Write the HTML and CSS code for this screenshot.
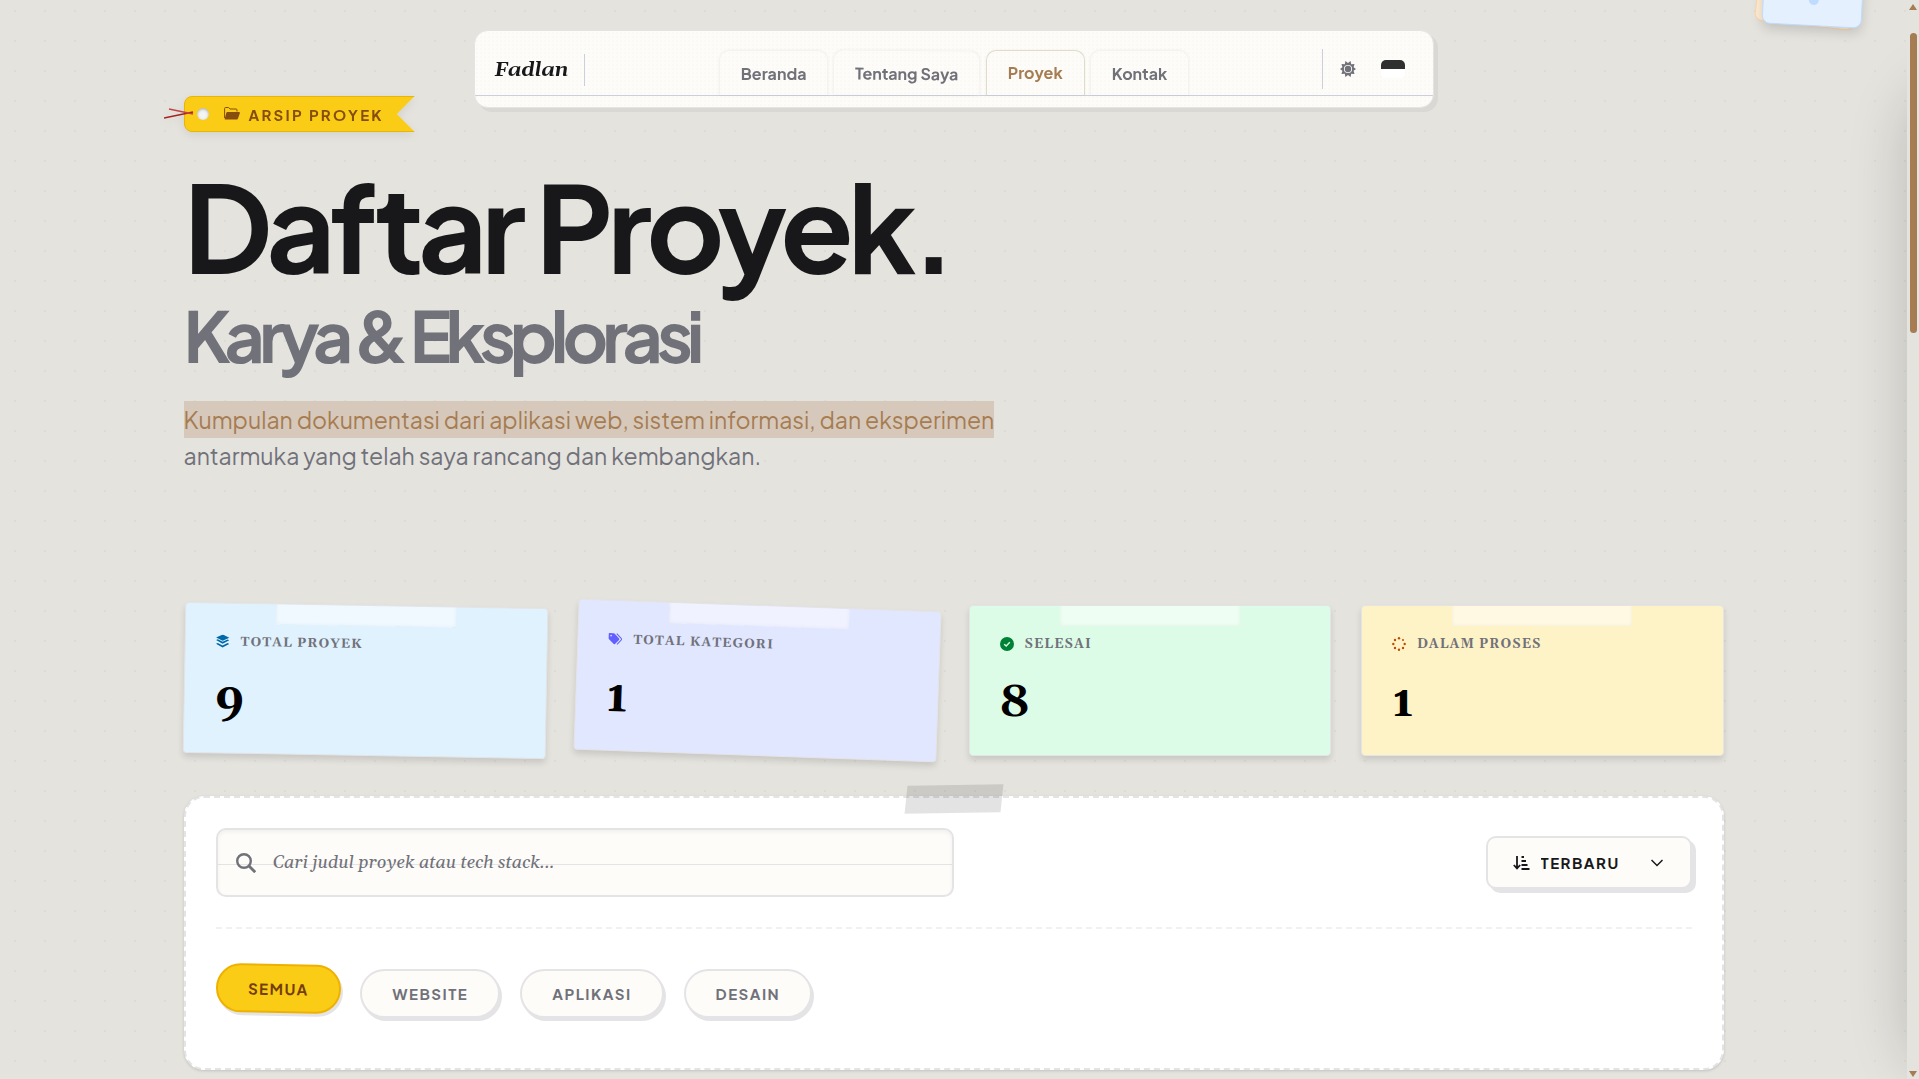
FILE: index.html
```html
<!DOCTYPE html>
<html lang="id">
<head>
    <meta charset="UTF-8">
    <meta name="viewport" content="width=device-width, initial-scale=1.0">
    <title>Daftar Proyek</title>
    <link rel="stylesheet" href="styles.css">
</head>
<body>

<!-- Navbar -->
<header class="navbar">
    <div class="navbar-inner">
        <a class="brand" href="#">Fadlan</a>
        <nav class="tabs">
            <a class="tab" href="#">Beranda</a>
            <a class="tab tab-tilt" href="#">Tentang Saya</a>
            <a class="tab active" href="#">Proyek</a>
            <a class="tab" href="#">Kontak</a>
        </nav>
        <div class="nav-tools">
            <button class="theme-button" aria-label="Tema">
                <svg viewBox="0 0 16 16" width="16" height="16">
                    <path fill="currentColor" fill-rule="evenodd" d="M8 2l2.6-2 .6 3.2 3.3-.1-.9 3.1L16 8l-2.4 1.8.9 3.1-3.3-.1-.6 3.2L8 14l-2.6 2-.6-3.2-3.3.1.9-3.1L0 8l2.4-1.8-.9-3.1 3.3.1L5.4 0zM8 3.9a4.100 4.100 0 1 0 0 8.200 4.100 4.100 0 0 0 0-8.200zM8 4.800a3.200 3.200 0 1 1 0 6.400 3.200 3.200 0 0 1 0-6.400z"/>
                </svg>
            </button>
            <button class="lang-button" aria-label="Bahasa"><span class="flag"></span></button>
        </div>
    </div>
</header>

<!-- Sticky notes in the corner -->
<div class="notes">
    <div class="note note-back"></div>
    <div class="note note-front"><span class="pin"></span></div>
</div>

<main class="container">
    <div class="tag-wrap">
        <div class="tag">
            <span class="tag-hole"></span>
            <svg viewBox="0 0 16 14" width="16" height="14">
                <path fill="none" stroke="currentColor" d="M.6 11V1.5q0-1 1-1h3L6 2h6q1 0 1 1v1.500"/>
                <path fill="currentColor" d="M3.300 5H15q1.200 0 .8 1.200l-1.800 5.300q-.3 1-1.300 1H1.500q-1.100 0-.7-1.100L2.300 6q.3-1 1-1z"/>
            </svg>
            <span>ARSIP PROYEK</span>
        </div>
        <svg class="string" viewBox="0 0 30 12" width="30" height="12">
            <path d="M0 10L29 4" stroke="#a8201f" stroke-width="1.600"/>
            <path d="M5 1L29 6" stroke="#c04545" stroke-width="1.600"/>
        </svg>
    </div>

    <h1 class="title">Daftar Proyek.
        <span class="subtitle">Karya &amp; Eksplorasi</span>
    </h1>
    <p class="intro"><mark>Kumpulan dokumentasi dari aplikasi web, sistem informasi, dan eksperimen</mark> antarmuka yang telah saya rancang dan kembangkan.</p>

    <!-- Stats -->
    <section class="stats">
        <div class="stat blue">
            <div class="stat-label">
                <svg viewBox="0 0 14 14" width="14" height="14" fill="currentColor">
                    <path d="M7 0l6.600 3.200L7 6.300.4 3.200z"/>
                    <path d="M.4 5.700l1.700-.8L7 7.300l4.900-2.400 1.700.8L7 9.200z"/>
                    <path d="M.4 9.300l1.700-.8L7 10.900l4.900-2.400 1.700.8L7 13z"/>
                </svg>
                TOTAL PROYEK
            </div>
            <div class="stat-value">9</div>
        </div>
        <div class="stat indigo">
            <div class="stat-label">
                <svg viewBox="0 0 14 14" width="14" height="14" fill="currentColor">
                    <path fill-rule="evenodd" d="M0 2.200Q0 1.200 1 1.200h4q.6 0 1 .4l4.700 4.700q.7.7 0 1.500l-3.900 4.100q-.7.700-1.500 0L.4 7.200Q0 6.700 0 6.200zM2.600 3a.8.8 0 1 0 0 1.600.8.8 0 0 0 0-1.600z"/>
                    <path fill="none" stroke="currentColor" d="M8.200 1.500l4.600 4.700q.9.900 0 1.800l-4 4.300"/>
                </svg>
                TOTAL KATEGORI
            </div>
            <div class="stat-value">1</div>
        </div>
        <div class="stat green">
            <div class="stat-label">
                <svg viewBox="0 0 14 14" width="14" height="14">
                    <circle cx="7" cy="7" r="7" fill="currentColor"/>
                    <path d="M4.200 7.200l2 1.900 3.600-3.800" fill="none" stroke="#dcfce7" stroke-width="1.400"/>
                </svg>
                SELESAI
            </div>
            <div class="stat-value">8</div>
        </div>
        <div class="stat amber">
            <div class="stat-label">
                <svg viewBox="0 0 14 14" width="14" height="14" fill="currentColor">
                    <circle cx="7" cy="1.300" r="1.200"/><circle cx="11" cy="3" r="1"/>
                    <circle cx="12.700" cy="7" r="1.200"/><circle cx="11" cy="11" r="1.200"/>
                    <circle cx="7" cy="12.700" r="1.200"/><circle cx="3" cy="11" r="1.200"/>
                    <circle cx="1.300" cy="7" r="1.200"/><circle cx="3" cy="3" r="1.200"/>
                </svg>
                DALAM PROSES
            </div>
            <div class="stat-value">1</div>
        </div>
    </section>

    <!-- Search and filter -->
    <section class="panel">
        <div class="panel-top">
            <label class="search">
                <svg viewBox="0 0 20 20" width="20" height="20" fill="none" stroke="currentColor">
                    <circle cx="8" cy="8" r="6.800" stroke-width="2.400"/>
                    <path d="M13 13l6.200 6.200" stroke-width="2.800"/>
                </svg>
                <input type="text" placeholder="Cari judul proyek atau tech stack..." aria-label="Cari proyek">
            </label>
            <label class="sort">
                <svg viewBox="0 0 17 14" width="17" height="14" fill="none" stroke="currentColor" stroke-width="1.800">
                    <path d="M4 0v12M.8 9L4 12.400 7.200 9"/>
                    <path d="M8.500 1h2.500M8.500 5h4.500M8.500 9h6M8.500 13h8"/>
                </svg>
                <select aria-label="Urutkan">
                    <option>TERBARU</option>
                    <option>TERLAMA</option>
                </select>
                <svg viewBox="0 0 12 8" width="12" height="8" fill="none" stroke="currentColor" stroke-width="1.500">
                    <path d="M.5 1L6 6.500 11.500 1"/>
                </svg>
            </label>
        </div>
        <div class="filters">
            <button class="pill selected">SEMUA</button>
            <button class="pill">WEBSITE</button>
            <button class="pill">APLIKASI</button>
            <button class="pill">DESAIN</button>
        </div>
    </section>
</main>

<!-- Shadow of the closed side drawer -->
<div class="drawer-edge"><div class="drawer"></div></div>

<div class="scrollbar">
    <span class="arrow arrow-up"></span>
    <span class="thumb"></span>
    <span class="arrow arrow-down"></span>
</div>

</body>
</html>
```
FILE: styles.css
```css
* {
    box-sizing: border-box;
}
body {
    margin: 0;
    padding-right: 12px;
    height: 100vh;
    overflow: hidden;
    font-family: "Plus Jakarta Sans", Inter, sans-serif;
    color: #18181b;
    background-color: #e4e3de;
    background-image: radial-gradient(circle, #dcdbd7 1px, transparent 1px);
    background-size: 30px 30px;
    background-position: 0 -4px;
}
button,
select,
input {
    font-family: inherit;
    color: inherit;
}

/* Navbar */
.navbar {
    position: fixed;
    top: 30px;
    left: 0;
    right: 12px;
    z-index: 10;
}
.navbar-inner {
    display: flex;
    align-items: stretch;
    justify-content: space-between;
    max-width: 960px;
    height: 78px;
    margin: 0 auto;
    padding: 18px 27px 12px 20px;
    border: 1px solid #e4e4e7;
    border-radius: 14px;
    background-color: #fdfcf8;
    background-image: linear-gradient(#cbd0d8, #cbd0d8), radial-gradient(#faf9f5 1px, transparent 1px);
    background-size: 100% 1px, 4px 4px;
    background-position: 0 64px, 0 0;
    background-repeat: no-repeat, repeat;
    box-shadow: 4px 4px 0 #d9d8d4;
}
.brand {
    align-self: flex-start;
    margin-top: 5px;
    padding-right: 16px;
    border-right: 1px solid #cbd0e0;
    color: #18181b;
    font: italic bold 20px/32px Georgia, Gelasio, "Liberation Serif", serif;
    text-decoration: none;
}
.tabs {
    display: flex;
    gap: 5px;
    padding-top: 1px;
}
.tab {
    height: 45px;
    padding: 0 21px;
    border: 1px solid #f4f3ef;
    border-bottom: 0;
    border-radius: 10px 10px 0 0;
    box-shadow: 0 0 3px rgba(0, 0, 0, 0.05);
    color: #71717a;
    font-size: 16px;
    font-weight: 700;
    line-height: 46px;
    text-decoration: none;
}
.tab-tilt {
    transform: rotate(0.5deg);
}
.tab.active {
    border-color: #e0dcc8;
    color: #a67c52;
    line-height: 44px;
}
.nav-tools {
    display: flex;
    align-items: center;
    gap: 25px;
    height: 40px;
    padding-left: 17px;
    border-left: 1px solid #cbd0d8;
}
.nav-tools button {
    display: flex;
    padding: 0;
    border: 0;
    background: none;
    color: #71717a;
}
.flag {
    width: 24px;
    height: 18px;
    border-radius: 5px;
    background: linear-gradient(#303030 50%, #ffffff 50%);
}

/* Corner notes */
.notes {
    position: absolute;
    top: -72px;
    right: 55px;
    width: 100px;
    height: 98px;
}
.note {
    position: absolute;
    inset: 0;
    border-radius: 8px;
    transform: rotate(3deg);
}
.note-back {
    left: -5px;
    right: 5px;
    border: 1px solid #fed7aa;
    background-color: #ffedd5;
    transform: rotate(6deg);
}
.note-front {
    border: 1px solid #bfdbfe;
    background-color: #e4f0fd;
    box-shadow: 0 5px 12px rgba(0, 0, 0, 0.15);
}
.pin {
    position: absolute;
    bottom: 20px;
    left: 45px;
    width: 10px;
    height: 10px;
    border-radius: 50%;
    background-color: #bfdbfe;
}

/* Heading */
.container {
    max-width: 1540px;
    margin: 0 auto;
    padding-top: 96px;
}
.tag-wrap {
    position: relative;
    width: fit-content;
    filter: drop-shadow(0 3px 4px rgba(0, 0, 0, 0.08));
}
.tag {
    display: flex;
    align-items: center;
    gap: 9px;
    height: 36px;
    padding: 0 30px 0 12px;
    border: 1px solid #eab308;
    border-radius: 8px 0 0 8px;
    background-color: #facc15;
    color: #854d0e;
    font-size: 15px;
    font-weight: 700;
    letter-spacing: 0.15em;
    clip-path: polygon(0 0, 100% 0, calc(100% - 18px) 50%, 100% 100%, 0 100%);
}
.tag-hole {
    width: 12px;
    height: 12px;
    margin-right: 6px;
    border-radius: 50%;
    background-color: #f4f4f4;
    box-shadow: inset 0 1px 3px rgba(0, 0, 0, 0.3);
}
.string {
    position: absolute;
    top: 12px;
    left: -20px;
}
.title {
    margin: 33px 0 32px;
    font-size: 120px;
    font-weight: 700;
    line-height: 120px;
    letter-spacing: -0.05em;
}
.subtitle {
    display: block;
    margin-top: 15px;
    color: #71717a;
    font-size: 70px;
    line-height: 70px;
}
.intro {
    max-width: 840px;
    margin: 0;
    color: #71717a;
    font-size: 23px;
    line-height: 36px;
}
.intro mark {
    padding: 4px 0;
    background-color: #d6c9bb;
    color: #a67c52;
}

/* Stats */
.stats {
    display: grid;
    grid-template-columns: repeat(4, 1fr);
    gap: 30px;
    margin-top: 131px;
}
.stat {
    position: relative;
    overflow: hidden;
    padding: 28px 30px;
    border: 1px solid #e4e4e7;
    border-radius: 4px;
    box-shadow: 0 4px 6px rgba(0, 0, 0, 0.12);
    font-family: Georgia, Gelasio, "Liberation Serif", serif;
    font-weight: bold;
    font-variant-numeric: oldstyle-nums;
}
/* Tape over the top edge */
.stat::before {
    content: "";
    position: absolute;
    top: -10px;
    left: 25%;
    width: 50%;
    height: 30px;
    background-color: rgba(255, 255, 255, 0.5);
    box-shadow: inset 0 0 4px rgba(0, 0, 0, 0.05);
}
.stat-label {
    display: flex;
    align-items: center;
    gap: 11px;
    color: #71717a;
    font-size: 13px;
    line-height: 20px;
    letter-spacing: 1px;
}
.stat-value {
    margin-top: 25px;
    color: #000000;
    font-size: 45px;
    line-height: 48px;
}
.blue {
    background-color: #dff2fe;
    transform: rotate(1deg);
}
.blue svg {
    color: #0069a8;
}
.indigo {
    background-color: #e0e7ff;
    transform: rotate(2deg);
}
.indigo svg {
    color: #615fff;
}
.green {
    background-color: #dcfce7;
}
.green svg {
    color: #008236;
}
.amber {
    background-color: #fef3c6;
}
.amber svg {
    color: #bb4d00;
}

/* Search and filter */
.panel {
    position: relative;
    margin-top: 40px;
    padding: 30px 30px 50px;
    border: 2px dashed #e4e4e7;
    border-radius: 20px;
    background-color: #ffffff;
    box-shadow: 0 1px 3px rgba(0, 0, 0, 0.15);
}
.panel::before {
    content: "";
    position: absolute;
    top: -13px;
    left: calc(50% - 48px);
    width: 96px;
    height: 28px;
    background-color: rgba(0, 0, 0, 0.11);
    transform: rotate(-1deg) skewX(-7deg);
}
.panel-top {
    display: flex;
    align-items: center;
    justify-content: space-between;
    padding-bottom: 30px;
    border-bottom: 2px dashed #f1f1f3;
}
.search {
    display: flex;
    align-items: center;
    gap: 17px;
    width: 50%;
    height: 69px;
    padding: 0 18px;
    border: 2px solid #e4e4e7;
    border-radius: 10px;
    background: linear-gradient(#e4e4e7, #e4e4e7) 0 34px / 100% 1px no-repeat #fdfcf8;
    box-shadow: inset 0 2px 4px rgba(0, 0, 0, 0.05);
    color: #71717a;
}
.search input {
    flex: 1;
    padding: 0;
    border: 0;
    outline: 0;
    background: none;
    font: italic 18px/28px Georgia, Gelasio, "Liberation Serif", serif;
}
.search input::placeholder {
    color: #71717a;
    opacity: 1;
}
.sort {
    display: flex;
    align-items: center;
    gap: 11px;
    height: 53px;
    padding: 0 27px 0 25px;
    border: 2px solid #e4e4e7;
    border-radius: 10px;
    background-color: #fdfcf8;
    box-shadow: 4px 4px 0 #e4e4e7;
}
.sort select {
    width: 99px;
    padding: 0;
    border: 0;
    appearance: none;
    background: none;
    font-size: 15px;
    font-weight: 700;
    letter-spacing: 0.1em;
}
.filters {
    display: flex;
    gap: 20px;
    padding-top: 40px;
}
.pill {
    height: 49px;
    padding: 0 30px;
    border: 2px solid #e4e4e7;
    border-radius: 25px;
    background-color: #fdfcf8;
    box-shadow: 2px 3px 0 #e4e4e7;
    color: #71717a;
    font-size: 15px;
    font-weight: 700;
    letter-spacing: 0.1em;
}
.pill.selected {
    border-color: #efb100;
    background-color: #facc15;
    color: #733e0a;
    transform: translateY(-5px) rotate(1deg);
}

/* Right edge */
.drawer-edge {
    position: fixed;
    top: 0;
    bottom: 0;
    right: 12px;
    width: 70px;
    overflow: hidden;
    pointer-events: none;
}
.drawer {
    position: absolute;
    top: 80px;
    bottom: 0;
    left: 100%;
    width: 300px;
    border-radius: 60px;
    box-shadow: 0 0 60px rgba(0, 0, 0, 0.18);
}
.scrollbar {
    position: fixed;
    top: 0;
    right: 0;
    bottom: 0;
    display: flex;
    flex-direction: column;
    align-items: center;
    width: 12px;
    padding: 4px 0 2px;
    background-color: #e4e3de;
}
.thumb {
    width: 7px;
    height: 28%;
    margin-top: 23px;
    border-radius: 4px;
    background-color: #a67c52;
}
.arrow {
    border: 4px solid transparent;
}
.arrow-up {
    border-top: 0;
    border-bottom: 6px solid #a67c52;
}
.arrow-down {
    margin-top: auto;
    border-bottom: 0;
    border-top: 6px solid #a67c52;
}
```
